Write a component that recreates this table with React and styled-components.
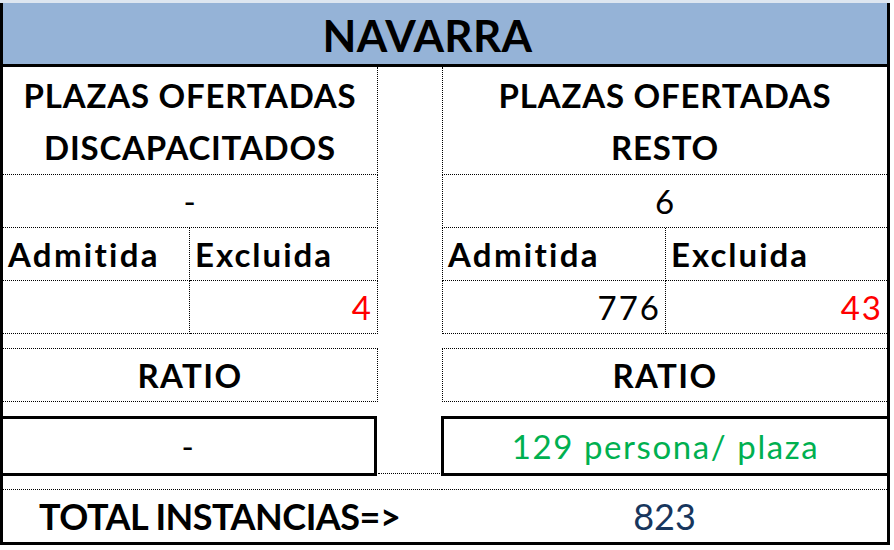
import styled, { createGlobalStyle } from "styled-components";

const Global = createGlobalStyle`
  body {
    margin: 0;
    background: #fff;
    font-family: Lato, "Open Sans", sans-serif;
  }
`;

const COLS = "187px 188px 64px 224px 221px";
const DOT = "1px dotted #000";

export default function App() {
  return (
    <>
      <Global />
      <Page>
        <TopStrip />
        <Sheet>
          <Header>NAVARRA</Header>

          <Row $h={108}>
            <Cell $span={2} $br $bb $bold>
              <Lines>PLAZAS OFERTADAS<br />DISCAPACITADOS</Lines>
            </Cell>
            <Gap />
            <Cell $span={2} $bl $bb $bold>
              <Lines>PLAZAS OFERTADAS<br />RESTO</Lines>
            </Cell>
          </Row>

          <Row $h={53}>
            <Cell $span={2} $br $bb>-</Cell>
            <Gap />
            <Cell $span={2} $bl $bb>6</Cell>
          </Row>

          <Row $h={53}>
            <Cell $align="left" $br $bb $bold $ls={2.3}>Admitida</Cell>
            <Cell $align="left" $br $bb $bold $ls={2}>Excluida</Cell>
            <Gap />
            <Cell $align="left" $bl $br $bb $bold $ls={2.3}>Admitida</Cell>
            <Cell $align="left" $bb $bold $ls={2}>Excluida</Cell>
          </Row>

          <Row $h={53}>
            <Cell $align="right" $br $bb></Cell>
            <Cell $align="right" $br $bb $color="#ff0000" $ls={2}>4</Cell>
            <Gap />
            <Cell $align="right" $bl $br $bb $ls={2}>776</Cell>
            <Cell $align="right" $bb $color="#ff0000" $ls={2}>43</Cell>
          </Row>

          <Row $h={14} />

          <Row $h={54}>
            <Cell $span={2} $bt $br $bb $bold $ls={1.4}>RATIO</Cell>
            <Gap />
            <Cell $span={2} $bt $bl $bb $bold $ls={1.4}>RATIO</Cell>
          </Row>

          <Row $h={14} />

          <Row $h={60}>
            <Box $side="left">-</Box>
            <Gap $bb />
            <Box $side="right" $color="#00b050">129 persona/ plaza</Box>
          </Row>

          <Row $h={13} />

          <Row $h={53}>
            <Cell $span={3} $align="left" $bt $bold $big $ls={-0.5} $pad={36}>TOTAL INSTANCIAS=&gt;</Cell>
            <Cell $span={2} $bt $big $color="#17365d" $ls={0}>823</Cell>
          </Row>
        </Sheet>
      </Page>
    </>
  );
}

const Page = styled.div`
  width: 894px;
  height: 550px;
  background: #fff;
  overflow: hidden;
`;

const TopStrip = styled.div`
  width: 890px;
  height: 3px;
  background: #dde6f0;
`;

const Sheet = styled.div`
  width: 890px;
  box-sizing: border-box;
  border-left: 3px solid #000;
  border-right: 3px solid #000;
  border-bottom: 3px solid #000;
  display: flex;
  flex-direction: column;
  color: #000;
`;

const Header = styled.div`
  height: 64px;
  box-sizing: border-box;
  background: #95b3d7;
  border-bottom: 3px solid #000;
  display: flex;
  align-items: center;
  justify-content: center;
  padding: 2px 35px 0 0;
  font-size: 44px;
  font-weight: 700;
  letter-spacing: 0.3px;
`;

const Row = styled.div`
  display: grid;
  grid-template-columns: ${COLS};
  height: ${(p) => p.$h}px;
`;

const Gap = styled.div`
  border-bottom: ${(p) => (p.$bb ? DOT : "none")};
  margin-bottom: ${(p) => (p.$bb ? "2px" : "0")};
`;

const Cell = styled.div`
  grid-column: span ${(p) => p.$span || 1};
  box-sizing: border-box;
  display: flex;
  align-items: center;
  justify-content: ${(p) =>
    p.$align === "left" ? "flex-start" : p.$align === "right" ? "flex-end" : "center"};
  padding: 0 ${(p) => (p.$align === "right" ? 4 : 0)}px 0 ${(p) => p.$pad ?? (p.$align === "left" ? 5 : 0)}px;
  border-top: ${(p) => (p.$bt ? DOT : "none")};
  border-right: ${(p) => (p.$br ? DOT : "none")};
  border-bottom: ${(p) => (p.$bb ? DOT : "none")};
  border-left: ${(p) => (p.$bl ? DOT : "none")};
  font-size: ${(p) => (p.$big ? 36 : 33)}px;
  font-weight: ${(p) => (p.$bold ? 700 : 400)};
  letter-spacing: ${(p) => p.$ls ?? 0.8}px;
  color: ${(p) => p.$color || "#000"};
  white-space: nowrap;
`;

const Lines = styled.div`
  text-align: center;
  line-height: 52px;
`;

const Box = styled.div`
  grid-column: span 2;
  box-sizing: border-box;
  display: flex;
  align-items: center;
  justify-content: center;
  border: 3px solid #000;
  ${(p) => (p.$side === "left" ? "border-left: none; margin-right: 1px;" : "border-right: none; margin-left: -1px;")}
  font-size: 33px;
  letter-spacing: 1.6px;
  color: ${(p) => p.$color || "#000"};
  white-space: nowrap;
`;
